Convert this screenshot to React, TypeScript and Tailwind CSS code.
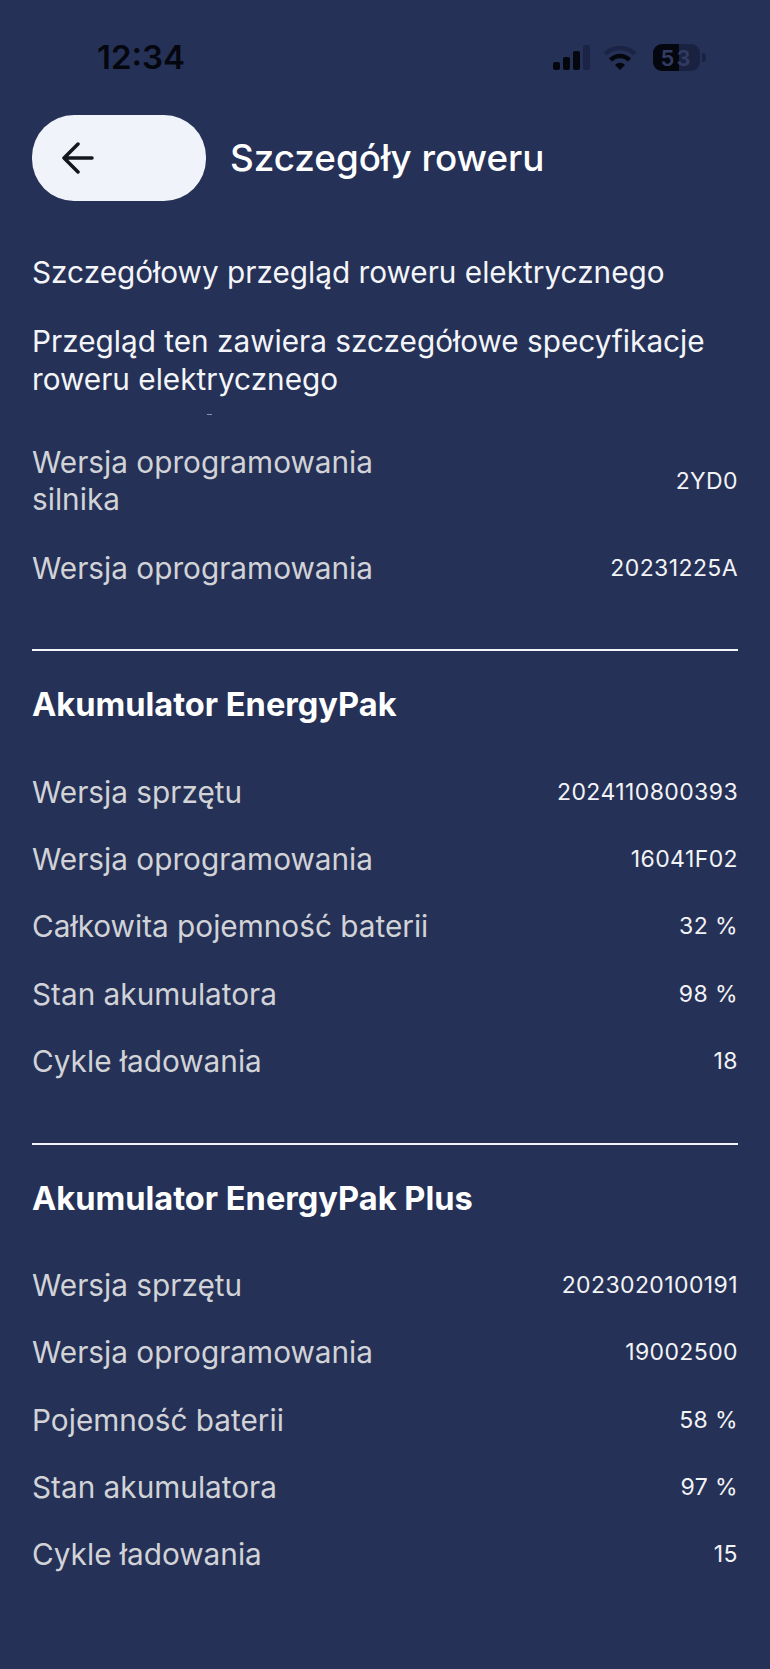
import React from "react";

function Row({ label, value }: { label: string; value: string }) {
  return (
    <div className="flex h-[67.25px] items-center justify-between">
      <span className="text-[29.75px] leading-[38px] text-[#d2d3d7]">{label}</span>
      <span className="text-[23px] leading-[30px] tracking-[0.4px] text-[#f2f3f5]">{value}</span>
    </div>
  );
}

function Section({ title, rows }: { title: string; rows: [string, string][] }) {
  return (
    <section className="mt-[48px] border-t-2 border-[#f4f5f8] pt-[33px]">
      <h2 className="text-[32.6px] font-bold leading-[40px] text-white">{title}</h2>
      <div className="mt-[34px]">
        {rows.map(([l, v], i) => (
          <Row key={i} label={l} value={v} />
        ))}
      </div>
    </section>
  );
}

function StatusIcons() {
  return (
    <div className="flex items-center">
      <svg width="40" height="26" viewBox="0 0 40 26" className="mr-[11px]">
        <rect x="1" y="17" width="7" height="8" rx="2" fill="#05070f" />
        <rect x="11" y="12" width="7" height="13" rx="2" fill="#05070f" />
        <rect x="21" y="6" width="7" height="19" rx="2" fill="#05070f" />
        <rect x="31" y="0" width="7" height="25" rx="2" fill="#1b2444" />
      </svg>
      <svg width="34" height="26" viewBox="0 0 34 26" className="mr-[16px]">
        <path d="M2 9 C10 1 24 1 32 9" stroke="#1b2444" strokeWidth="4.5" fill="none" />
        <path d="M7.5 15 C13 9.5 21 9.5 26.5 15" stroke="#05070f" strokeWidth="4.5" fill="none" />
        <path d="M12 20 C15 17 19 17 22 20 L17 25 Z" fill="#05070f" />
      </svg>
      <div className="relative flex h-[27px] w-[47px] items-center justify-center overflow-hidden rounded-[9px] bg-[#1a2242] text-[22px] font-semibold leading-none tracking-[2px] text-[#323c63]">
        <div className="absolute inset-y-0 left-0 w-[26px] bg-[#05070f]" />
        <span className="relative">
          <span className="text-[#323c63]">5</span>3
        </span>
      </div>
      <div className="ml-[2px] h-[9px] w-[4px] rounded-r-full bg-[#1a2242]" />
    </div>
  );
}

export default function App() {
  return (
    <div className="h-[1669px] w-[770px] overflow-hidden bg-[#253157] px-[32px] font-['Inter',sans-serif]">
      <div className="flex h-[115px] items-start justify-between pl-[65px] pr-[32px] pt-[37px]">
        <span className="text-[33px] font-semibold leading-[40px] text-[#05070f]">12:34</span>
        <div className="pt-[7px]">
          <StatusIcons />
        </div>
      </div>

      <div className="flex items-center">
        <button className="flex h-[86px] w-[174px] items-center rounded-[42px] bg-[#f0f3fa] pl-[30px]">
          <svg width="32" height="32" viewBox="0 0 32 32" fill="none" stroke="#14161e" strokeWidth="3.5" strokeLinecap="round" strokeLinejoin="round">
            <path d="M30 16 H2 M16 2 L2 16 L16 30" />
          </svg>
        </button>
        <h1 className="ml-[24px] text-[36.8px] font-medium leading-[44px] text-white">Szczegóły roweru</h1>
      </div>

      <p className="mt-[52px] text-[29.75px] leading-[38px] text-[#f4f5f8]">Szczegółowy przegląd roweru elektrycznego</p>
      <p className="mt-[31px] text-[29.75px] leading-[38px] text-[#f4f5f8]">
        Przegląd ten zawiera szczegółowe specyfikacje roweru elektrycznego
      </p>

      <div className="mt-[16px] h-[1px] w-[5px] translate-x-[175px] bg-[#8d95ac]" />

      <div className="mt-[21px]">
        <div className="mb-[8px] flex h-[90px] items-center justify-between">
          <span className="w-[360px] text-[29.75px] leading-[37px] text-[#d2d3d7]">Wersja oprogramowania silnika</span>
          <span className="text-[23px] leading-[30px] tracking-[0.4px] text-[#f2f3f5]">2YD0</span>
        </div>
        <Row label="Wersja oprogramowania" value="20231225A" />
      </div>

      <Section
        title="Akumulator EnergyPak"
        rows={[
          ["Wersja sprzętu", "2024110800393"],
          ["Wersja oprogramowania", "16041F02"],
          ["Całkowita pojemność baterii", "32 %"],
          ["Stan akumulatora", "98 %"],
          ["Cykle ładowania", "18"],
        ]}
      />
      <Section
        title="Akumulator EnergyPak Plus"
        rows={[
          ["Wersja sprzętu", "2023020100191"],
          ["Wersja oprogramowania", "19002500"],
          ["Pojemność baterii", "58 %"],
          ["Stan akumulatora", "97 %"],
          ["Cykle ładowania", "15"],
        ]}
      />
    </div>
  );
}
